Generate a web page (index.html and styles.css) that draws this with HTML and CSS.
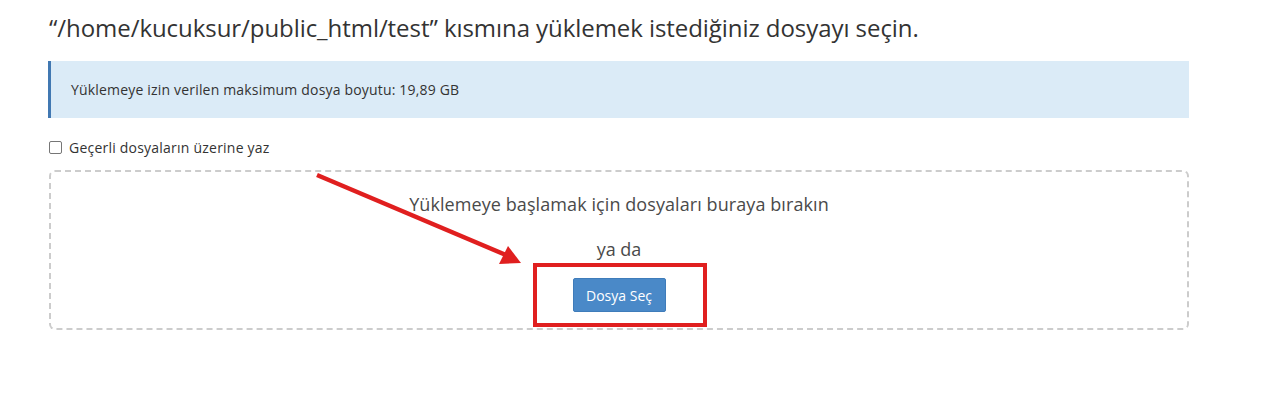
FILE: index.html
```html
<!DOCTYPE html>
<html lang="tr">
<head>
<meta charset="utf-8">
<title>Dosya Yükle</title>
<link rel="stylesheet" href="styles.css">
</head>
<body>
<div class="page">
  <h1 class="title">“/home/kucuksur/public_html/test” kısmına yüklemek istediğiniz dosyayı seçin.</h1>
  <div class="alert">Yüklemeye izin verilen maksimum dosya boyutu: 19,89 GB</div>
  <label class="overwrite"><span class="box"></span>Geçerli dosyaların üzerine yaz</label>
  <div class="dropzone">
    <p class="drop-text">Yüklemeye başlamak için dosyaları buraya bırakın</p>
    <p class="or">ya da</p>
    <button class="btn">Dosya Seç</button>
  </div>
</div>
<div class="highlight"></div>
<svg class="arrow" width="1263" height="408" viewBox="0 0 1263 408">
  <line x1="317" y1="175" x2="506" y2="255" stroke="#e01f1f" stroke-width="4.5"/>
  <polygon points="521,263 499,264 508,246" fill="#e01f1f"/>
</svg>
</body>
</html>
```
FILE: styles.css
```css
html, body {
  margin: 0;
  padding: 0;
  background: #fff;
}
body {
  font-family: "Open Sans", "DejaVu Sans", sans-serif;
  color: #333;
  position: relative;
  width: 1263px;
  height: 408px;
  overflow: hidden;
}
.page {
  padding-left: 49px;
  width: 1140px;
}
.title {
  font-size: 24px;
  font-weight: 400;
  line-height: 33px;
  letter-spacing: -0.06px;
  margin: 11px 0 0 0;
  color: #333;
}
.alert {
  margin-top: 17px;
  margin-left: -1px;
  height: 57px;
  box-sizing: border-box;
  background: #dbebf7;
  border-left: 3px solid #4178b2;
  padding: 0 0 0 20px;
  display: flex;
  align-items: center;
  font-size: 14px;
  letter-spacing: 0.18px;
  color: #333;
}
.overwrite {
  display: flex;
  align-items: center;
  margin-top: 20px;
  font-size: 14px;
  letter-spacing: 0.22px;
  line-height: 19px;
  color: #333;
}
.box {
  width: 11px;
  height: 11px;
  border: 1px solid #767676;
  border-radius: 2px;
  margin-right: 7px;
  background: #fff;
}
.dropzone {
  margin-top: 13px;
  height: 160px;
  box-sizing: border-box;
  border: 2px dashed #cccccc;
  border-radius: 6px;
  display: flex;
  flex-direction: column;
  align-items: center;
  padding-top: 20px;
}
.drop-text {
  margin: 0;
  font-size: 18px;
  line-height: 24px;
  letter-spacing: 0.08px;
  color: #4a4a4a;
}
.or {
  margin: 21px 0 0 0;
  font-size: 18px;
  line-height: 24px;
  color: #4a4a4a;
}
.btn {
  margin-top: 17px;
  width: 93px;
  height: 34px;
  background: #4a89c8;
  border: 1px solid #3f7cba;
  border-radius: 2px;
  color: #fff;
  font-family: "Open Sans", "DejaVu Sans", sans-serif;
  font-size: 14px;
  padding: 0;
}
.highlight {
  position: absolute;
  left: 533px;
  top: 263px;
  width: 174px;
  height: 64px;
  box-sizing: border-box;
  border: 4px solid #e01f1f;
}
.arrow {
  position: absolute;
  left: 0;
  top: 0;
  pointer-events: none;
}
```
